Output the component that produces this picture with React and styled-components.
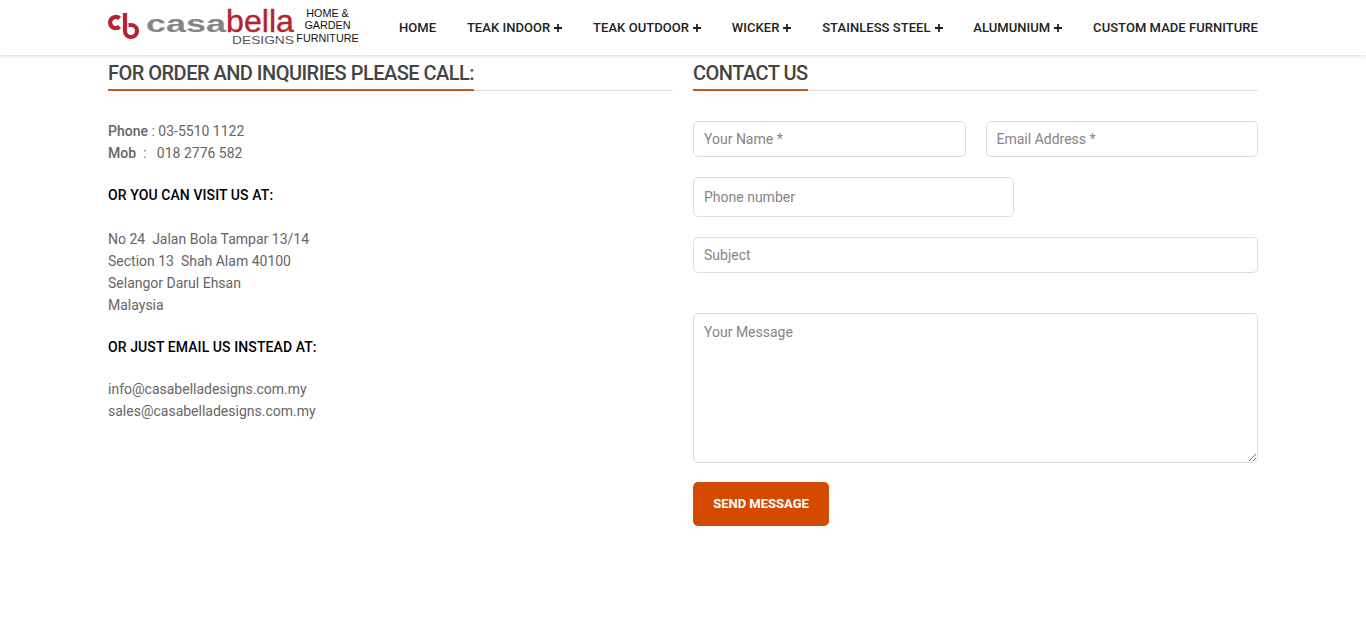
import React from "react";
import styled, { createGlobalStyle } from "styled-components";

const Global = createGlobalStyle`
  html, body { margin: 0; padding: 0; background: #fff; }
  body { font-family: Roboto, "Liberation Sans", sans-serif; font-size: 14px; color: #666; }
  * { box-sizing: border-box; }
`;

const Page = styled.div`
  min-height: 626px;
  background: #fff;
`;

const Header = styled.header`
  height: 55px;
  background: #fff;
  box-shadow: 0 1px 4px rgba(0, 0, 0, 0.16);
`;

const Container = styled.div`
  width: 1150px;
  margin: 0 auto;
`;

const HeaderRow = styled(Container)`
  display: flex;
  align-items: flex-start;
  justify-content: space-between;
  height: 55px;
`;

const LogoSvg = styled.svg`
  display: block;
  width: 252px;
  height: 46px;
  margin-top: 4px;
  flex: none;
`;

const Nav = styled.nav`
  display: flex;
  gap: 30.8px;
  padding-top: 19px;
`;

const NavItem = styled.a`
  display: flex;
  align-items: center;
  gap: 4px;
  height: 17px;
  font-size: 13px;
  font-weight: 500;
  line-height: 17px;
  letter-spacing: 0.05px;
  color: #222;
  white-space: nowrap;
`;

const Plus = styled.svg`
  width: 8px;
  height: 8px;
  display: block;
`;

const Main = styled(Container)`
  display: grid;
  grid-template-columns: 565px 565px;
  column-gap: 20px;
`;

const Heading = styled.div`
  height: 36px;
  border-bottom: 1px solid #ddd;
  margin-bottom: ${(p) => p.$bottom}px;
`;

const HeadingText = styled.h2`
  display: inline-block;
  margin: 0;
  height: 36px;
  padding-top: 6px;
  font-size: 20px;
  line-height: 24px;
  letter-spacing: -0.52px;
  font-weight: 500;
  color: #444;
  border-bottom: 2px solid #c35a1e;
`;

const Para = styled.p`
  margin: 0;
  font-size: 14px;
  line-height: 22px;
  color: #666;
  white-space: pre-wrap;
`;

const Label = styled.strong`
  font-weight: 500;
  color: #666;
`;

const SubHead = styled.h4`
  margin: ${(p) => p.$top}px 0 ${(p) => p.$bottom}px;
  font-size: 14px;
  line-height: 20px;
  letter-spacing: 0.09px;
  font-weight: 500;
  color: #000;
`;

const Form = styled.form`
  display: flex;
  flex-direction: column;
`;

const Row = styled.div`
  display: flex;
  gap: 20px;
`;

const Input = styled.input`
  display: block;
  width: ${(p) => p.$width || "100%"};
  height: ${(p) => p.$height || 36}px;
  margin-bottom: ${(p) => p.$bottom}px;
  padding: 0 10px;
  border: 1px solid #ddd;
  border-radius: 5px;
  background: #fff;
  outline: none;
  font: 400 14px Roboto, sans-serif;
  color: #666;
  &::placeholder { color: #858585; opacity: 1; }
`;

const TextArea = styled.textarea`
  display: block;
  width: 100%;
  height: 150px;
  margin: 0 0 19px;
  padding: 9px 10px;
  border: 1px solid #ddd;
  border-radius: 5px;
  background: #fff;
  outline: none;
  font: 400 14px/18px Roboto, sans-serif;
  &::placeholder { color: #858585; opacity: 1; }
`;

const Send = styled.button`
  width: 136px;
  height: 44px;
  padding: 0 0 2px;
  border: 0;
  border-radius: 5px;
  background: #d44a00;
  color: #fff;
  font: 700 13px Roboto, sans-serif;
`;

const items = [
  ["HOME", false],
  ["TEAK INDOOR", true],
  ["TEAK OUTDOOR", true],
  ["WICKER", true],
  ["STAINLESS STEEL", true],
  ["ALUMUNIUM", true],
  ["CUSTOM MADE FURNITURE", false],
];

const Logo = () => (
  <LogoSvg viewBox="0 0 252 46" aria-label="Casabella Designs">
    <path d="M11.6 14.4 A5.6 5.6 0 1 0 11.6 22.6" fill="none" stroke="#b5232e" strokeWidth="4.4" />
    <path d="M17 9 V27 A6 6 0 1 0 23 21 H20.5" fill="none" stroke="#b5232e" strokeWidth="4.2" />
    <text x="38" y="28" fontFamily="Liberation Sans" fontSize="24" fontWeight="700" fill="#858585" textLength="80" lengthAdjust="spacingAndGlyphs">casa</text>
    <text x="118" y="28" fontFamily="Liberation Sans" fontSize="31" stroke="#b5232e" strokeWidth="0.35" fill="#b5232e" textLength="68" lengthAdjust="spacingAndGlyphs">bella</text>
    <text x="124" y="39.5" fontFamily="Liberation Sans" fontSize="11.5" fill="#555" textLength="62" lengthAdjust="spacingAndGlyphs">DESIGNS</text>
    <g fontFamily="Liberation Sans" fontSize="10.8" fill="#111" textAnchor="middle">
      <text x="219.5" y="12.5">HOME &amp;</text>
      <text x="219.5" y="25">GARDEN</text>
      <text x="219.5" y="37.5">FURNITURE</text>
    </g>
  </LogoSvg>
);

export default function App() {
  return (
    <Page>
      <Global />
      <Header>
        <HeaderRow>
          <Logo />
          <Nav>
            {items.map(([label, more]) => (
              <NavItem key={label}>
                {label}
                {more && (
                  <Plus viewBox="0 0 8 8">
                    <path d="M4 0 V8 M0 4 H8" stroke="#222" strokeWidth="1.8" />
                  </Plus>
                )}
              </NavItem>
            ))}
          </Nav>
        </HeaderRow>
      </Header>
      <Main>
        <section>
          <Heading $bottom={29}>
            <HeadingText>FOR ORDER AND INQUIRIES PLEASE CALL:</HeadingText>
          </Heading>
          <Para><Label>Phone</Label> : 03-5510 1122</Para>
          <Para><Label>Mob</Label>{"  :   018 2776 582"}</Para>
          <SubHead $top={21} $bottom={23}>OR YOU CAN VISIT US AT:</SubHead>
          <Para>{"No 24  Jalan Bola Tampar 13/14"}</Para>
          <Para>{"Section 13  Shah Alam 40100"}</Para>
          <Para>Selangor Darul Ehsan</Para>
          <Para>Malaysia</Para>
          <SubHead $top={21} $bottom={21}>OR JUST EMAIL US INSTEAD AT:</SubHead>
          <Para>info@casabelladesigns.com.my</Para>
          <Para>sales@casabelladesigns.com.my</Para>
        </section>
        <section>
          <Heading $bottom={30}>
            <HeadingText>CONTACT US</HeadingText>
          </Heading>
          <Form>
            <Row>
              <Input placeholder="Your Name *" $bottom={20} />
              <Input placeholder="Email Address *" $bottom={20} />
            </Row>
            <Input placeholder="Phone number" $width="321px" $height={40} $bottom={20} />
            <Input placeholder="Subject" $bottom={40} />
            <TextArea placeholder="Your Message" />
            <Send type="button">SEND MESSAGE</Send>
          </Form>
        </section>
      </Main>
    </Page>
  );
}
